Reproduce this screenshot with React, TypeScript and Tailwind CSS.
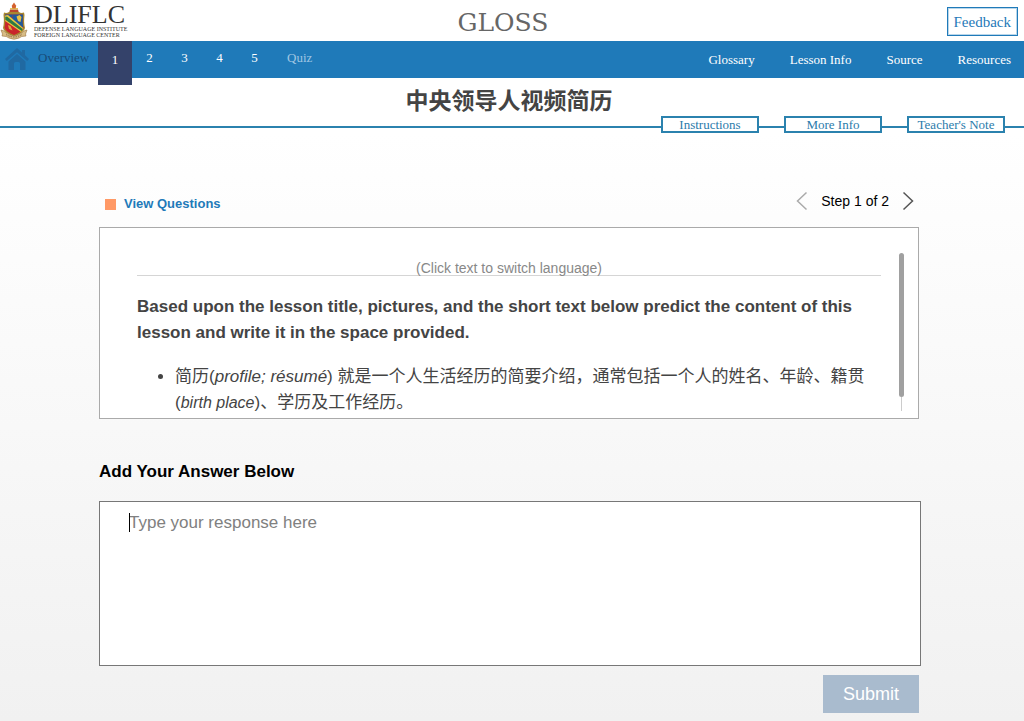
import { useState } from "react";

const serif = "font-['Liberation_Serif','Noto_Sans_CJK_SC',serif]";
const sans = "font-['Liberation_Sans','Noto_Sans_CJK_SC',sans-serif]";

function Crest() {
  return (
    <svg viewBox="0 0 28 38" className="h-[38px] w-7 shrink-0" aria-hidden="true">
      <path d="M14 0.5l2.2 3.2-.6 3.2h-3.2l-.6-3.2z" fill="#d4612f" />
      <path d="M10 7.5h8l1 3.5H9z" fill="#b9452c" />
      <path d="M10 6.8h8" stroke="#d9b13b" strokeWidth="1.2" />
      <path d="M4 10.500q2.500 1 5-.5h10q2 1.500 5 .5l.5 2.500q-1 8 .5 13-1 5-11 8.500Q4 31 3 26q1.500-5 .5-13z" fill="#a8872f" />
      <path d="M5 12.500h18q-.8 8 .5 13-1 4-9.500 7.500-8.500-3.500-9.500-7.500 1.300-5 .5-13z" fill="#c9252b" />
      <path d="M13 12.500h10q-.8 8 .3 13.500L12 17.500z" fill="#1f5a9c" />
      <path d="M5 12.500h8l-1 3-5 .5-2-1z" fill="#1f5a9c" />
      <path d="M5.200 13.500v5.500l15.800 11 2.200-4L8 13z" fill="#ecc840" />
      <path d="M5.300 15v2.800l16.400 11.200 1-2L7 14.500z" fill="#2d7a43" />
      <path d="M16.500 14.500l3-1.500 2 2-1 5-2.500-1z" fill="#e8c044" />
      <path d="M8 23l2.500 1 2 4.500-3.500-1.500z" fill="#e0a83a" />
      <path d="M1 28q4 .5 5 3 8 5.500 16 0 1-2.500 5-3l-1.500 4 .5 2q-5 0-7 2-5 2.500-10 0-2-2-7-2l.5-2z" fill="#d8bd85" stroke="#9b7442" strokeWidth=".6" />
      <path d="M6 32.500q8 5 16 0" fill="none" stroke="#81603c" strokeWidth=".9" strokeDasharray="1.500 1" />
    </svg>
  );
}

function HomeIcon() {
  return (
    <svg viewBox="0 0 24 22" className="h-[22px] w-6" fill="#2069a2" aria-hidden="true">
      <path d="M12 0l5 4.500V2h3v5.200L24 11l-1.800 2L12 4.200 1.800 13 0 11z" />
      <path d="M3.500 13.500L12 6l8.500 7.500V22H15v-6.500a1.500 1.500 0 0 0-1.500-1.500h-3A1.500 1.500 0 0 0 9 15.500V22H3.500z" />
    </svg>
  );
}

function Chevron({ left = false }: { left?: boolean }) {
  return (
    <svg viewBox="0 0 12 20" className="h-5 w-3" fill="none" stroke="currentColor" strokeWidth="1.500" aria-hidden="true">
      <path d={left ? "M10.500 1.500L1.500 10l9 8.500" : "M1.500 1.500l9 8.500-9 8.500"} />
    </svg>
  );
}

const steps = ["2", "3", "4", "5"];
const links = ["Glossary", "Lesson Info", "Source", "Resources"];
const tabs = ["Instructions", "More Info", "Teacher's Note"];

export default function App() {
  const [answer, setAnswer] = useState("");
  return (
    <div className={`flex min-h-screen flex-col bg-white ${sans}`}>
      <header className={`grid h-[41px] grid-cols-[1fr_auto_1fr] items-center pr-1.5 ${serif}`}>
        <a href="#home" className="flex items-center gap-1.5" aria-label="DLIFLC home">
          <Crest />
          <span className="flex flex-col whitespace-nowrap text-[#333]">
            <span className="text-[26px] leading-[23px]">DLIFLC</span>
            <span className="text-[6px] leading-[6px]">DEFENSE LANGUAGE INSTITUTE</span>
            <span className="text-[6px] leading-[6px]">FOREIGN LANGUAGE CENTER</span>
          </span>
        </a>
        <div className="pt-1 pr-3 font-['DejaVu_Serif',serif] text-[25px] leading-8 text-[#666]">GLOSS</div>
        <button className="mt-0.5 h-[29px] justify-self-end border border-[#1f7ab9] px-1.5 text-[15px] leading-6 text-[#1f7ab9] outline outline-1 -outline-offset-2 outline-[#b9d6ea]">
          Feedback
        </button>
      </header>

      <nav className={`flex h-[37px] items-start bg-[#1f7ab9] text-[13px] leading-[34px] text-white ${serif}`}>
        <a href="#overview" className="flex w-[98px] items-center gap-[9px] pl-[5px] text-[#174b78]">
          <span className="pt-0.5"><HomeIcon /></span>
          Overview
        </a>
        <a href="#1" aria-current="page" className="h-11 w-[34px] bg-[#34426a] pt-0.5 text-center">1</a>
        {steps.map((s) => (
          <a key={s} href={`#${s}`} className="w-[35px] text-center">{s}</a>
        ))}
        <a href="#quiz" className="pl-[15px] text-[#9fc6e3]">Quiz</a>
        <div className="ml-auto flex gap-[35px] pt-0.5 pr-[13px]">
          {links.map((l) => (
            <a key={l} href="#menu">{l}</a>
          ))}
        </div>
      </nav>

      <div className="flex flex-col">
        <h1 className="pt-2 pr-1.5 text-center text-[23px] leading-[30px] font-bold text-[#444]">中央领导人视频简历</h1>
        <div className={`flex items-center ${serif}`}>
          <span className="mt-1 h-0.5 flex-1 bg-[#2b82ae]" />
          {tabs.map((t, i) => (
            <div key={t} className="flex items-center">
              <button className="h-[17px] w-[98px] border-2 border-[#2b82ae] bg-white text-[13px] leading-3 text-[#2b7bab]">{t}</button>
              <span className={`mt-1 h-0.5 bg-[#2b82ae] ${i === 2 ? "w-[19px]" : "w-[25px]"}`} />
            </div>
          ))}
        </div>
      </div>

      <main className="flex flex-1 flex-col bg-linear-to-b from-white to-[#f1f1f1] pt-14 pr-[105px] pl-[99px]">
        <div className="flex h-[38px] items-start justify-between pr-[5px] pl-1.5">
          <button className="flex items-center gap-2 pt-[5px] text-[13px] leading-5 font-bold text-[#1f7ab9]">
            <span className="size-[11px] bg-[#ff9966]" />
            View Questions
          </button>
          <div className="flex items-center gap-[13px] pt-0.5 text-sm text-black">
            <button aria-label="Previous step" className="text-[#aaa]"><Chevron left /></button>
            <span>Step 1 of 2</span>
            <button aria-label="Next step" className="text-[#555]"><Chevron /></button>
          </div>
        </div>

        <section className="flex h-[192px] border border-[#aaa] bg-white pt-[25px] pr-[14px] pl-[37px] text-[17px] leading-[26px] text-[#444]">
          <div className="flex-1">
            <button className="block h-[23px] w-full border-b border-[#d5d5d5] pt-[7px] text-center text-[14px] leading-4 text-[#888]">
              (Click text to switch language)
            </button>
            <p className="mt-[18px] font-bold">
              Based upon the lesson title, pictures, and the short text below predict the content of this lesson and write it in the space provided.
            </p>
            <ul className="mt-[18px] list-disc pl-[38px]">
              <li>
                简历(<i>profile; résumé</i>) 就是一个人生活经历的简要介绍，通常包括一个人的姓名、年龄、籍贯 (<i className="text-[16px]">birth place</i>)、学历及工作经历。
              </li>
            </ul>
          </div>
          <div className="ml-[18px] flex w-[5px] flex-col items-center">
            <span className="h-36 w-[5px] rounded-full bg-[#a0a0a0]" />
            <span className="h-[14px] w-px bg-[#ccc]" />
          </div>
        </section>

        <label htmlFor="answer" className="mt-10 text-[17px] leading-[26px] font-bold text-black">Add Your Answer Below</label>
        <div className="relative -mr-0.5 mt-4 flex">
          <textarea
            id="answer"
            value={answer}
            onChange={(e) => setAnswer(e.target.value)}
            placeholder="Type your response here"
            className="h-[165px] w-full resize-none border border-[#777] bg-white px-[29px] py-2 text-[17px] leading-[26px] outline-none placeholder:text-[#808080]"
          />
          <span className="absolute top-3 left-[30px] h-[19px] w-px bg-black" />
        </div>
        <button className="mt-[9px] mb-2 h-[38px] w-24 self-end bg-[#a9bbce] text-lg text-white">Submit</button>
      </main>
    </div>
  );
}
